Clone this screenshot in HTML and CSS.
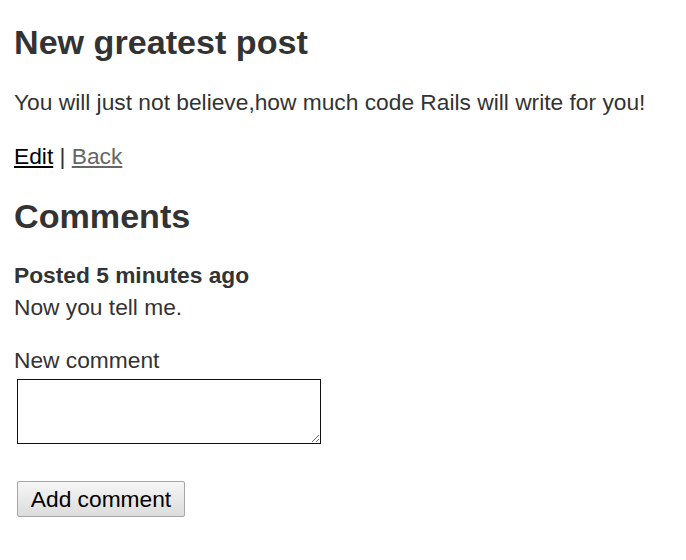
FILE: index.html
```html
<!DOCTYPE html>
<html>
<head>
<meta charset="utf-8">
<title>Post</title>
<link rel="stylesheet" href="styles.css">
</head>
<body>
<h1 class="title">New greatest post</h1>
<p class="body-text">You will just not believe,how much code Rails will write for you!</p>
<p class="links"><a class="link" href="#">Edit</a> | <a class="link visited" href="#">Back</a></p>
<h2 class="section">Comments</h2>
<p class="comment"><strong>Posted 5 minutes ago</strong><br>Now you tell me.</p>
<form class="form">
  <div class="field">
    <label class="label" for="c">New comment</label>
    <textarea class="textarea" id="c"></textarea>
  </div>
  <div class="actions">
    <button class="button" type="button">Add comment</button>
  </div>
</form>
</body>
</html>
```
FILE: styles.css
```css
html { background: #fff; }
body {
  margin: 0;
  padding: 22px 14px 0;
  color: #333;
  font-family: "Liberation Sans", Arial, sans-serif;
  font-size: 22.75px;
  line-height: 31.5px;
}
.title {
  font-size: 34.125px;
  line-height: 40px;
  margin: 0 0 25px;
}
.body-text { margin: 0 0 22px; }
.links { margin: 0 0 24px; }
.link { color: #000; }
.link.visited { color: #666; }
.section {
  font-size: 34.125px;
  line-height: 40px;
  margin: 0 0 24px;
}
.comment { margin: 0 0 21.5px; }
.form { margin: 0; }
.field {
  display: flex;
  flex-direction: column;
  align-items: flex-start;
}
.label { display: block; }
.textarea {
  display: block;
  margin: 3px 0 0 3px;
  width: 304px;
  height: 65px;
  border: 1px solid #111;
  padding: 2px;
  box-sizing: border-box;
  resize: both;
}
.actions { margin-top: 37px; }
.button {
  display: block;
  margin-left: 3px;
  width: 168px;
  height: 36px;
  font-family: "Liberation Sans", Arial, sans-serif;
  font-size: 22.75px;
  color: #000;
  border: 1px solid #a6a6a6;
  border-radius: 2px;
  background: linear-gradient(#f6f6f6, #dcdcdc);
  padding: 0;
}
```
